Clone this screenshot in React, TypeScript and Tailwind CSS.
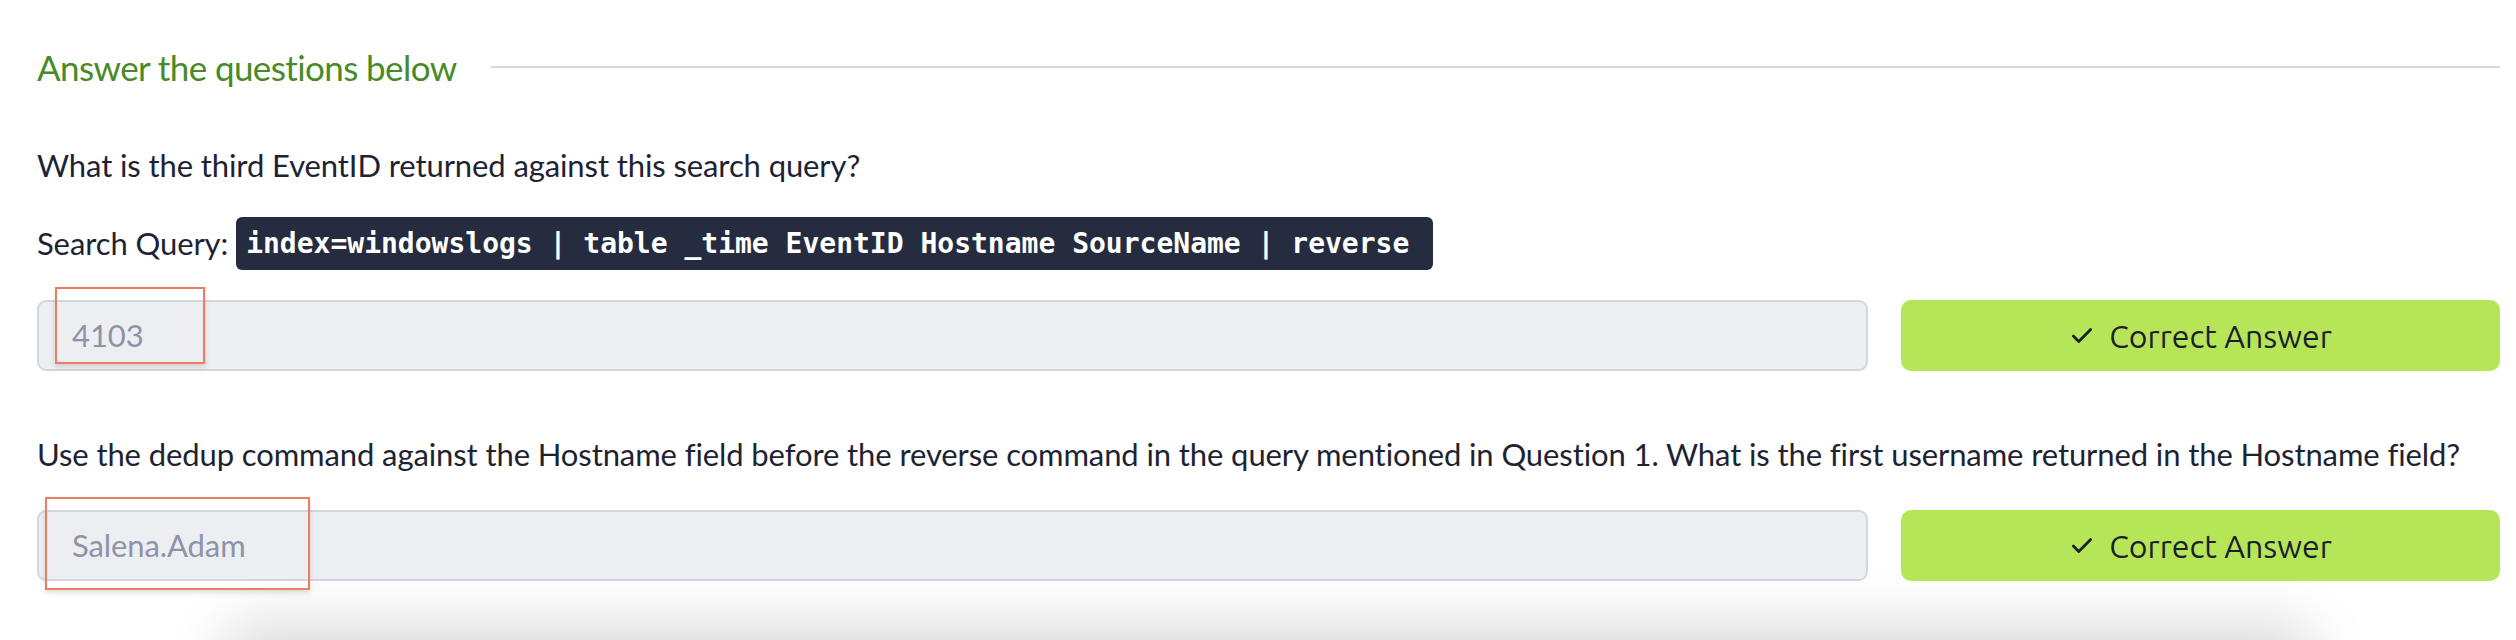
import { Check } from 'lucide-react';

const bodyFont = "font-['Source_Sans_Pro','Lato','Roboto',sans-serif]";

interface QuestionProps {
  question: React.ReactNode;
  answer: string;
  markClass: string;
  children?: React.ReactNode;
}

function AnswerRow({ answer, markClass }: { answer: string; markClass: string }) {
  return (
    <div className="flex items-stretch gap-[33px]">
      <div className="relative flex-1">
        <div className="flex h-[71px] items-center rounded-[9px] border-2 border-[#d3d6dd] bg-[#eceef2] pl-[33px] text-[31px] tracking-[-0.1px] text-[#8d94a7]">
          {answer}
        </div>
        <div
          className={`pointer-events-none absolute border-2 border-[#ec7c62] shadow-[0_3px_5px_rgba(0,0,0,0.12)] ${markClass}`}
        />
      </div>
      <button className="flex w-[599px] items-center justify-center gap-[14px] rounded-[10px] bg-[#b6e658] font-['Ubuntu','Open_Sans',sans-serif] text-[32px] text-[#1b1f2d]">
        <Check size={26} strokeWidth={2.6} />
        <span>Correct Answer</span>
      </button>
    </div>
  );
}

function Question({ question, answer, markClass, children }: QuestionProps) {
  return (
    <div>
      <p className="text-[31px] leading-[40px] tracking-[-0.1px] text-[#1d2333]">{question}</p>
      {children}
      <div className="mt-[36px]">
        <AnswerRow answer={answer} markClass={markClass} />
      </div>
    </div>
  );
}

export default function App() {
  return (
    <div className={`relative h-[640px] overflow-hidden bg-white ${bodyFont}`}>
      <div className="pl-[37px] pr-[16px] pt-[44px]">
        <div className="flex items-center gap-[34px]">
          <h2 className="text-[35px] leading-[46px] tracking-[-0.6px] text-[#478b28]">Answer the questions below</h2>
          <div className="h-[2px] flex-1 bg-[#d4d8de]" />
        </div>

        <div className="mt-[55px]">
          <p className="text-[31px] leading-[40px] tracking-[-0.1px] text-[#1d2333]">
            What is the third EventID returned against this search query?
          </p>
          <div className="mt-[32px] flex items-center gap-[8px]">
            <span className="text-[31px] tracking-[-0.1px] text-[#1d2333]">Search Query:</span>
            <code className="flex h-[53px] items-center rounded-[6px] bg-[#252c40] pl-[10px] pr-[24px] font-['DejaVu_Sans_Mono',monospace] text-[28px] font-bold text-white">
              index=windowslogs | table _time EventID Hostname SourceName | reverse
            </code>
          </div>
          <div className="mt-[30px]">
            <AnswerRow answer="4103" markClass="left-[18px] top-[-13px] h-[77px] w-[150px]" />
          </div>
        </div>

        <div className="mt-[63px]">
          <Question
            question="Use the dedup command against the Hostname field before the reverse command in the query mentioned in Question 1. What is the first username returned in the Hostname field?"
            answer="Salena.Adam"
            markClass="left-[8px] top-[-13px] h-[93px] w-[265px]"
          />
        </div>

        <div className="mx-[200px] mt-[62px] h-[200px] rounded-[24px] bg-white shadow-[0_-4px_60px_16px_rgba(0,0,0,0.15)]" />
      </div>
    </div>
  );
}
